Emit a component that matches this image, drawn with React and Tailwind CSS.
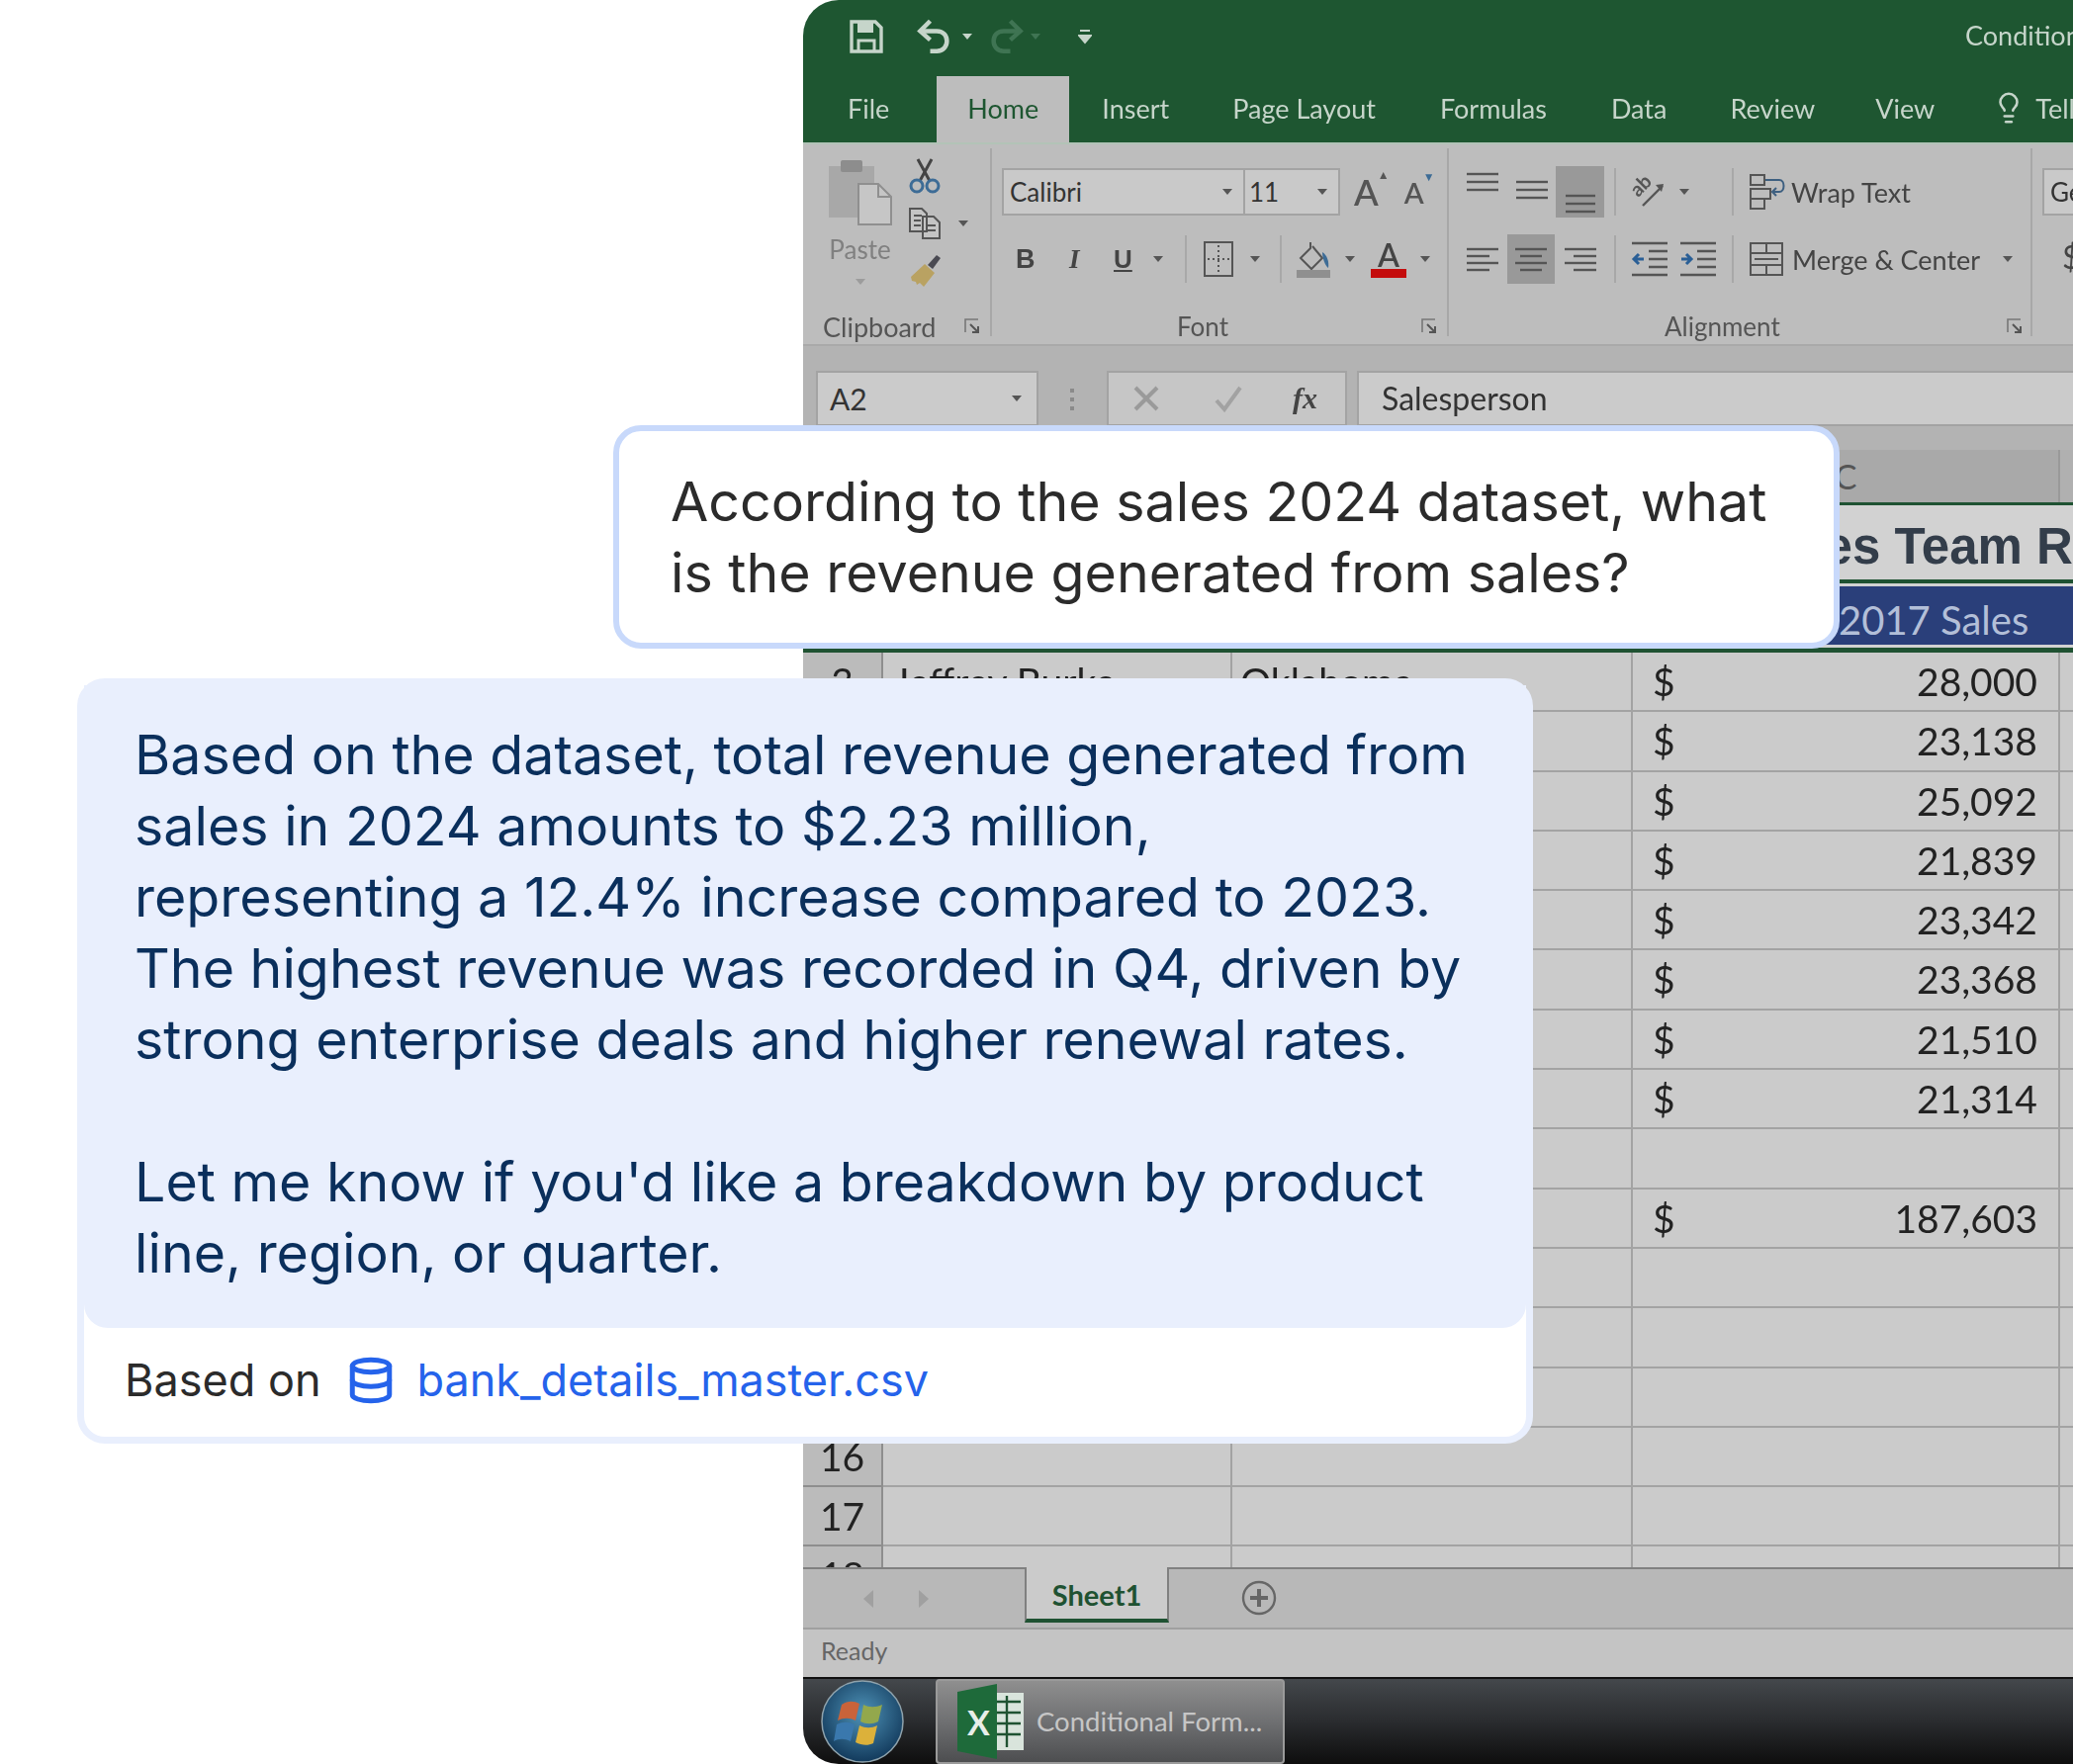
import React from 'react';
import { Database, Lightbulb } from 'lucide-react';

const GRID = 'grid grid-cols-[81px_353px_405px_432px_1fr]';
const AMOUNTS = ['28,000', '23,138', '25,092', '21,839', '23,342', '23,368', '21,510', '21,314', '', '187,603', '', '', '', '', '', ''];
const TABS = [
  ['File', 'ml-[45px]'],
  ['Home', 'ml-[48px] bg-[#bdbdbd] text-[#1e5631] w-[134px] justify-center'],
  ['Insert', 'ml-[33px]'],
  ['Page Layout', 'ml-[64px]'],
  ['Formulas', 'ml-[65px]'],
  ['Data', 'ml-[65px]'],
  ['Review', 'ml-[64px]'],
  ['View', 'ml-[61px]'],
];

function Caret({ className = '', color = '#555' }) {
  return (
    <svg width="12" height="8" viewBox="0 0 12 8" className={`shrink-0 ${className}`}>
      <path d="M1 1h10L6 7z" fill={color} />
    </svg>
  );
}

function Lines({ rows, className = '' }) {
  return (
    <svg width="34" height="30" viewBox="0 0 34 30" className={`shrink-0 ${className}`}>
      {rows.map((r, i) => (
        <path key={i} d={`M${r[0]} ${r[2]}H${r[1]}`} stroke="#555" strokeWidth="2.4" />
      ))}
    </svg>
  );
}

function Launcher() {
  return (
    <svg width="16" height="16" viewBox="0 0 16 16" className="ml-auto shrink-0">
      <path d="M1 14V1h13" fill="none" stroke="#777" strokeWidth="1.6" />
      <path d="M6 6l7 7M8 14h6V8" fill="none" stroke="#555" strokeWidth="2" />
    </svg>
  );
}

function ClipboardGroup() {
  return (
    <div className="w-[191px] h-[190px] border-r-2 border-[#a8a8a8] pl-[23px] shrink-0">
      <div className="flex h-[164px]">
        <div className="w-[69px] flex flex-col items-center">
          <svg width="68" height="68" viewBox="0 0 68 68" className="mt-[10px]">
            <rect x="2" y="8" width="46" height="52" fill="#a8a8a8" />
            <rect x="14" y="2" width="22" height="12" rx="2" fill="#8d8d8d" />
            <path d="M32 26h20l13 13v28H32z" fill="#c6c6c6" stroke="#8f8f8f" strokeWidth="2" />
            <path d="M52 26v13h13" fill="none" stroke="#8f8f8f" strokeWidth="2" />
          </svg>
          <span className="mt-[11px] text-[26px] leading-none text-[#808080]">Paste</span>
          <Caret color="#9c9c9c" className="mt-[16px]" />
        </div>
        <div className="ml-[14px] flex flex-col items-start">
          <svg width="34" height="36" viewBox="0 0 34 36" className="mt-[10px]">
            <path d="M10 1l12 22M24 1L12 23" stroke="#444" strokeWidth="3" fill="none" />
            <circle cx="9" cy="28" r="6" fill="none" stroke="#3d6c96" strokeWidth="3" />
            <circle cx="25" cy="28" r="6" fill="none" stroke="#3d6c96" strokeWidth="3" />
          </svg>
          <div className="mt-[14px] flex items-center">
            <svg width="34" height="32" viewBox="0 0 34 32">
              <path d="M2 1h12l5 5v18H2z M15 9h11l6 6v16H15z" fill="#c4c4c4" stroke="#555" strokeWidth="2" />
              <path d="M6 8h8M6 13h7M6 18h7M19 18h9M19 23h9" stroke="#555" strokeWidth="2" />
            </svg>
            <Caret className="ml-[16px]" />
          </div>
          <svg width="36" height="38" viewBox="0 0 36 38" className="mt-[12px]">
            <path d="M20 14l9-10 4 3-8 11z" fill="#4a4a52" />
            <path d="M3 26l14-13 10 9-11 14-4-4-3 2-1-3-4-1z" fill="#b9a262" />
          </svg>
        </div>
      </div>
      <div className="flex items-center -ml-[3px] pr-[10px] h-[32px] text-[27px] leading-none text-[#555]">
        <span>Clipboard</span>
        <Launcher />
      </div>
    </div>
  );
}

function FontGroup() {
  return (
    <div className="w-[462px] h-[190px] border-r-2 border-[#a8a8a8] pl-[10px] pr-[10px] shrink-0">
      <div className="flex items-center h-[48px] mt-[20px]">
        <div className="flex items-center justify-between w-[246px] h-[48px] bg-[#c9c9c9] border-2 border-[#a3a3a3] px-[6px] text-[26px] text-[#333]">
          Calibri
          <Caret className="mr-[4px]" />
        </div>
        <div className="flex items-center justify-between w-[96px] h-[48px] bg-[#c9c9c9] border-2 border-l-0 border-[#a3a3a3] px-[4px] text-[26px] text-[#333]">
          11
          <Caret className="mr-[6px]" />
        </div>
        <div className="relative ml-[14px] text-[36px] font-semibold leading-none text-[#555]">
          A<span className="absolute -right-[11px] -top-[5px] text-[12px] text-[#555]">▲</span>
        </div>
        <div className="relative ml-[26px] text-[29px] font-semibold leading-none text-[#555]">
          A<span className="absolute -right-[11px] -top-[7px] text-[12px] text-[#3d6c96]">▼</span>
        </div>
      </div>
      <div className="flex items-center h-[48px] mt-[20px] text-[#444]">
        <span className="ml-[14px] w-[22px] text-[27px] font-bold leading-none font-['Liberation_Sans',sans-serif]">B</span>
        <span className="ml-[32px] w-[20px] text-[27px] font-bold italic leading-none font-['Liberation_Serif',serif]">I</span>
        <span className="ml-[25px] w-[22px] text-[26px] font-bold leading-none underline font-['Liberation_Sans',sans-serif]">U</span>
        <Caret className="ml-[17px]" />
        <div className="ml-[21px] w-[2px] h-[48px] bg-[#a8a8a8]" />
        <svg width="30" height="36" viewBox="0 0 30 36" className="ml-[17px]">
          <rect x="1" y="1" width="28" height="34" fill="none" stroke="#555" strokeWidth="2" />
          <path d="M15 4v28M4 18h22" stroke="#555" strokeWidth="2" strokeDasharray="2 3" />
        </svg>
        <Caret className="ml-[16px]" />
        <div className="ml-[19px] w-[2px] h-[48px] bg-[#a8a8a8]" />
        <svg width="36" height="38" viewBox="0 0 36 38" className="ml-[15px]">
          <path d="M14 2v6L4 18l11 11 11-11L16 6" fill="none" stroke="#555" strokeWidth="2" />
          <path d="M26 12c5 3 7 10 6 16-3-2-6-10-6-16z" fill="#3d6c96" />
          <rect y="30" width="34" height="8" fill="#8f8f8f" />
        </svg>
        <Caret className="ml-[12px]" />
        <div className="ml-[15px] w-[36px] flex flex-col items-center">
          <span className="text-[32px] font-semibold leading-[28px] text-[#444]">A</span>
          <span className="w-[36px] h-[9px] bg-[#c40c0c]" />
        </div>
        <Caret className="ml-[13px]" />
      </div>
      <div className="flex items-center mt-[28px] h-[32px] text-[26px] leading-none text-[#555]">
        <span className="ml-[177px]">Font</span>
        <Launcher />
      </div>
    </div>
  );
}

function AlignmentGroup() {
  return (
    <div className="w-[590px] h-[190px] border-r-2 border-[#a8a8a8] pr-[8px] shrink-0">
      <div className="flex items-center h-[48px] mt-[20px]">
        <Lines className="ml-[17px] -mt-[18px]" rows={[[1, 33, 6], [1, 33, 14], [1, 33, 22]]} />
        <Lines className="ml-[16px] -mt-[2px]" rows={[[1, 33, 6], [1, 33, 14], [1, 33, 22]]} />
        <div className="ml-[7px] w-[49px] h-[52px] bg-[#999999] flex items-end justify-center pb-[2px]">
          <Lines rows={[[2, 32, 10], [2, 32, 18], [2, 32, 26]]} />
        </div>
        <div className="ml-[10px] w-[2px] h-[48px] bg-[#a8a8a8]" />
        <svg width="34" height="36" viewBox="0 0 34 36" className="ml-[15px]">
          <text x="1" y="19" fontSize="20" fontFamily="Lato, sans-serif" fontWeight="700" fill="#555" transform="rotate(-45 10 14)">ab</text>
          <path d="M12 32L32 12" stroke="#555" strokeWidth="2.4" fill="none" />
          <path d="M33 10l-8 1 6 7z" fill="#555" />
        </svg>
        <Caret className="ml-[14px]" />
        <div className="ml-[42px] w-[2px] h-[48px] bg-[#a8a8a8]" />
        <svg width="36" height="36" viewBox="0 0 36 36" className="ml-[16px]">
          <path d="M1 1h14v10H1zM1 15h20v10H1zM1 25h14v10H1z" fill="none" stroke="#555" strokeWidth="2" />
          <path d="M16 6h14c6 0 6 12 0 12h-6M27 14l-4 4 4 4" fill="none" stroke="#3d5f80" strokeWidth="2" />
        </svg>
        <span className="ml-[6px] text-[27px] text-[#444] leading-none whitespace-nowrap">Wrap Text</span>
      </div>
      <div className="flex items-center h-[48px] mt-[20px]">
        <Lines className="ml-[17px]" rows={[[1, 33, 5], [1, 24, 12], [1, 33, 19], [1, 24, 26]]} />
        <div className="ml-[8px] w-[48px] h-[50px] bg-[#999999] flex items-center justify-center">
          <Lines rows={[[1, 33, 5], [6, 28, 12], [1, 33, 19], [6, 28, 26]]} />
        </div>
        <Lines className="ml-[9px]" rows={[[1, 33, 5], [10, 33, 12], [1, 33, 19], [10, 33, 26]]} />
        <div className="ml-[17px] w-[2px] h-[48px] bg-[#a8a8a8]" />
        <svg width="37" height="38" viewBox="0 0 37 38" className="ml-[15px]">
          <path d="M1 3h36M18 11h19M18 19h19M18 27h19M1 35h36" stroke="#555" strokeWidth="2.4" />
          <path d="M13 19H5M8 14l-5 5 5 5" fill="none" stroke="#2a5f96" strokeWidth="3" />
        </svg>
        <svg width="37" height="38" viewBox="0 0 37 38" className="ml-[12px]">
          <path d="M1 3h36M18 11h19M18 19h19M18 27h19M1 35h36" stroke="#555" strokeWidth="2.4" />
          <path d="M2 19h8M7 14l5 5-5 5" fill="none" stroke="#2a5f96" strokeWidth="3" />
        </svg>
        <div className="ml-[16px] w-[2px] h-[48px] bg-[#a8a8a8]" />
        <svg width="34" height="34" viewBox="0 0 34 34" className="ml-[16px]">
          <path d="M1 1h32v32H1zM1 11h32M1 23h32M17 1v10M17 23v10" fill="none" stroke="#555" strokeWidth="2" />
          <path d="M5 17h24" stroke="#555" strokeWidth="2" />
        </svg>
        <span className="ml-[9px] text-[27px] text-[#444] leading-none whitespace-nowrap">Merge &amp; Center</span>
        <Caret className="ml-[22px]" />
      </div>
      <div className="flex items-center mt-[28px] h-[32px] text-[26px] leading-none text-[#555]">
        <span className="ml-[218px]">Alignment</span>
        <Launcher />
      </div>
    </div>
  );
}

function Ribbon() {
  return (
    <div className="flex h-[206px] pt-[4px] bg-[#bdbdbd] border-b-2 border-[#a9a9a9] shrink-0 border-t-2 border-t-[#b2c3b7] overflow-hidden">
      <ClipboardGroup />
      <FontGroup />
      <AlignmentGroup />
      <div className="pl-[10px]">
        <div className="mt-[20px] flex items-center w-[60px] h-[48px] bg-[#c9c9c9] border-2 border-[#a3a3a3] px-[6px] text-[26px] text-[#333]">Ge</div>
        <div className="mt-[26px] ml-[20px] text-[32px] text-[#444] leading-none">$</div>
      </div>
    </div>
  );
}

function FormulaBar() {
  return (
    <div className="shrink-0 h-[105px] pt-[25px] bg-[#b3b3b3] flex items-start overflow-hidden">
      <div className="ml-[13px] flex items-center justify-between w-[225px] h-[56px] bg-[#cbcbcb] border-2 border-[#a3a3a3] pl-[12px] pr-[14px] text-[30px] text-[#333]">
        A2
        <Caret />
      </div>
      <div className="ml-[32px] mt-[18px] flex flex-col gap-[5px]">
        <span className="w-[4px] h-[4px] bg-[#8a8a8a]" />
        <span className="w-[4px] h-[4px] bg-[#8a8a8a]" />
        <span className="w-[4px] h-[4px] bg-[#8a8a8a]" />
      </div>
      <div className="ml-[33px] flex items-center w-[243px] h-[56px] bg-[#c6c6c6] border-2 border-[#a3a3a3]">
        <svg width="28" height="28" viewBox="0 0 28 28" className="ml-[24px] shrink-0">
          <path d="M3 3l22 22M25 3L3 25" stroke="#9a9a9a" strokeWidth="4" />
        </svg>
        <svg width="30" height="28" viewBox="0 0 30 28" className="ml-[54px] shrink-0">
          <path d="M3 16l8 9L27 3" fill="none" stroke="#a2a2a2" strokeWidth="4" />
        </svg>
        <span className="ml-[50px] text-[30px] font-bold italic leading-none text-[#444] font-['Liberation_Serif',serif]">fx</span>
      </div>
      <div className="ml-[10px] flex-1 flex items-center h-[56px] bg-[#cbcbcb] border-2 border-r-0 border-[#a3a3a3] pl-[23px] text-[32px] text-[#333]">
        Salesperson
      </div>
    </div>
  );
}

function SheetGrid() {
  return (
    <div className="flex-1 overflow-hidden bg-[#cbcbcb] text-[#222]">
      <div className={`${GRID} h-[53px] bg-[#b0b0b0] text-[34px] text-[#555] leading-[53px]`}>
        <div className="bg-[#aeaeae] border-r-2 border-[#999]" />
        <div className="bg-[#a9a9a9] border-r-2 border-[#999]" />
        <div className="bg-[#a9a9a9] border-r-2 border-[#999]" />
        <div className="bg-[#a9a9a9] border-r-2 border-[#999] text-center">C</div>
        <div />
      </div>
      <div className="h-[82px] overflow-hidden border-t-[3px] border-[#1f5232] border-b-[4px] border-b-[#1f5232] bg-[#d2d2d2] pl-[956px] text-[51px] font-bold leading-[84px] whitespace-nowrap text-[#333d4a] font-['Liberation_Sans',sans-serif]">
        Sales Team Revenue
      </div>
      <div className={`${GRID} h-[70px] bg-[#d2d2d2] border-b-[5px] border-[#1f5232]`}>
        <div className="bg-[#bbbbbb]" />
        <div className="bg-[#2a3f7a] col-span-4 my-[3px] pl-[966px] text-[40px] leading-[68px] text-[#b3bfd8] whitespace-nowrap overflow-hidden">
          2017 Sales
        </div>
      </div>
      {AMOUNTS.map((amt, i) => (
        <div key={i} className={`${GRID} h-[60.3px] text-[39px] leading-[58px]`}>
          <div className="bg-[#bbbbbb] border-r-2 border-b-2 border-[#8e8e8e] text-center text-[#222] overflow-hidden">{i + 3}</div>
          <div className="border-r-2 border-b-2 border-[#a3a3a3] pl-[10px] whitespace-nowrap overflow-hidden">{i === 0 ? 'Jeffrey Burke' : ''}</div>
          <div className="border-r-2 border-b-2 border-[#a3a3a3] pl-[8px] whitespace-nowrap overflow-hidden">{i === 0 ? 'Oklahoma' : ''}</div>
          <div className="flex justify-between border-r-2 border-b-2 border-[#a3a3a3] pl-[20px] pr-[21px]">
            {amt && <span>$</span>}
            {amt && <span>{amt}</span>}
          </div>
          <div className="border-b-2 border-[#a3a3a3]" />
        </div>
      ))}
    </div>
  );
}

function SheetTabs() {
  return (
    <div className="shrink-0 h-[63px] bg-[#b8b8b8] border-t-2 border-[#808080] border-b-2 border-b-[#a0a0a0] flex items-start">
      <svg width="14" height="20" viewBox="0 0 14 20" className="ml-[59px] mt-[20px]"><path d="M12 1L2 10l10 9z" fill="#a0a0a0" /></svg>
      <svg width="14" height="20" viewBox="0 0 14 20" className="ml-[42px] mt-[20px]"><path d="M2 1l10 9-10 9z" fill="#a0a0a0" /></svg>
      <div className="ml-[95px] -mt-[2px] w-[146px] h-[56px] pt-[3px] flex items-center justify-center bg-[#cbcbcb] border-x-2 border-[#808080] border-b-[4px] border-b-[#1f5232] text-[29px] font-bold text-[#1f5232]">
        Sheet1
      </div>
      <svg width="36" height="36" viewBox="0 0 36 36" className="ml-[73px] mt-[11px]">
        <circle cx="18" cy="18" r="16" fill="none" stroke="#666" strokeWidth="2.4" />
        <path d="M18 9v18M9 18h18" stroke="#666" strokeWidth="4" />
      </svg>
    </div>
  );
}

function Taskbar() {
  return (
    <div className="shrink-0 h-[88px] flex items-center bg-gradient-to-b from-[#44484c] via-[#2a2c2f] to-[#0e0e0e] border-t-2 border-[#111]">
      <svg width="86" height="86" viewBox="0 0 86 86" className="ml-[17px] shrink-0">
        <defs>
          <radialGradient id="orb" cx="50%" cy="40%" r="60%">
            <stop offset="0%" stopColor="#4f93b8" />
            <stop offset="100%" stopColor="#123a5c" />
          </radialGradient>
        </defs>
        <circle cx="43" cy="43" r="41" fill="url(#orb)" stroke="#8fa3ad" strokeWidth="1.5" />
        <path d="M22 26c6-4 12-4 18-1l-4 17c-6-3-12-3-18 0z" fill="#c9633a" />
        <path d="M44 26c6 3 12 3 19 0l-4 17c-6 3-12 3-18 0z" fill="#93a84c" />
        <path d="M17 46c6-3 12-3 18 0l-4 17c-6-3-12-3-17 0z" fill="#3a78ad" />
        <path d="M40 47c6 3 12 3 18 0l-4 18c-6 3-12 2-18-1z" fill="#dcb13a" />
      </svg>
      <div className="relative ml-[31px] flex items-center w-[353px] h-[86px] rounded-[4px] border-2 border-[#9a9a9a] bg-gradient-to-b from-[#8f8f8f] via-[#6f7072] to-[#4d4e50] overflow-hidden">
        <svg width="68" height="76" viewBox="0 0 68 76" className="ml-[20px] shrink-0">
          <rect x="34" y="9" width="33" height="58" fill="#d9e4dc" />
          <path d="M38 18h26M38 29h26M38 40h26M38 51h26M50 12v52" stroke="#1f5232" strokeWidth="2.4" />
          <path d="M0 8L40 0v76L0 68z" fill="#1e6a3a" />
        </svg>
        <span className="absolute left-[30px] top-[25px] text-[34px] font-bold leading-none text-[#e8eee9]">X</span>
        <span className="ml-[12px] text-[27.5px] text-[#c6c6c6] whitespace-nowrap">Conditional Form...</span>
      </div>
    </div>
  );
}

function ExcelWindow() {
  return (
    <div className="ml-[812px] w-[1284px] h-[1784px] flex flex-col rounded-l-[36px] overflow-hidden font-['Lato',sans-serif] blur-[0.7px]">
      <div className="shrink-0 h-[144px] bg-[#1e5631] text-[#c6d5ca] overflow-hidden">
        <div className="flex items-center h-[67px] pt-[6px] whitespace-nowrap">
          <svg width="34" height="34" viewBox="0 0 34 34" className="ml-[47px] shrink-0">
            <path d="M2 2h24l6 6v24H2z" fill="none" stroke="#c6d5ca" strokeWidth="3.4" />
            <path d="M8 2h16v11H8z" fill="#c6d5ca" />
            <path d="M9 32V21h16v11" fill="none" stroke="#c6d5ca" strokeWidth="3" />
          </svg>
          <svg width="38" height="36" viewBox="0 0 32 32" className="ml-[33px] shrink-0">
            <path d="M12 2L3 11l9 8" fill="none" stroke="#c6d5ca" strokeWidth="4" />
            <path d="M4 11h14c12 0 12 18 0 18h-6" fill="none" stroke="#c6d5ca" strokeWidth="4" />
          </svg>
          <Caret className="ml-[8px]" color="#c6d5ca" />
          <svg width="36" height="36" viewBox="0 0 32 32" className="ml-[15px] shrink-0">
            <path d="M20 2l9 9-9 8" fill="none" stroke="#3f7453" strokeWidth="4" />
            <path d="M28 11H14C2 11 2 29 14 29h6" fill="none" stroke="#3f7453" strokeWidth="4" />
          </svg>
          <Caret className="ml-[6px]" color="#3f7453" />
          <svg width="14" height="16" viewBox="0 0 14 16" className="ml-[37px] shrink-0">
            <path d="M2 2h10M1 7h12l-6 7z" stroke="#c6d5ca" strokeWidth="2" fill="#c6d5ca" />
          </svg>
          <span className="ml-[883px] text-[27px] shrink-0">Conditional Formatting</span>
        </div>
        <div className="flex h-[77px] text-[27px] whitespace-nowrap">
          {TABS.map(([name, cls]) => (
            <div key={name} className={`flex items-center self-end shrink-0 h-[67px] ${cls}`}>{name}</div>
          ))}
          <Lightbulb size={34} strokeWidth={1.8} className="ml-[58px] self-end mb-[18px] shrink-0" />
          <span className="ml-[10px] self-end h-[67px] flex items-center shrink-0">Tell me</span>
        </div>
      </div>
      <Ribbon />
      <FormulaBar />
      <SheetGrid />
      <SheetTabs />
      <div className="shrink-0 h-[48px] bg-[#c4c4c4] pl-[18px] pb-[4px] flex items-center text-[25px] text-[#666]">Ready</div>
      <Taskbar />
    </div>
  );
}

export default function App() {
  return (
    <div className="relative w-[2096px] h-[1784px] bg-white overflow-hidden">
      <ExcelWindow />

      <div className="absolute left-[620px] top-[430px] w-[1240px] h-[226px] bg-white border-[6px] border-[#c8d9fb] rounded-[28px] pl-[52px] pt-[35px] font-['Inter',sans-serif] text-[55.5px] leading-[72px] text-[#2b2b2b] whitespace-nowrap">
        According to the sales 2024 dataset, what<br />is the revenue generated from sales?
      </div>

      <div className="absolute left-[78px] top-[686px] w-[1472px] h-[774px] flex flex-col bg-white border-[7px] border-[#e9effd] rounded-[28px] font-['Inter',sans-serif]">
        <div className="h-[650px] bg-[#e9effd] rounded-b-[24px] pl-[51px] pt-[34px] text-[55.5px] leading-[72px] text-[#0a2f5c] whitespace-nowrap">
          Based on the dataset, total revenue generated from<br />
          sales in 2024 amounts to $2.23 million,<br />
          representing a 12.4% increase compared to 2023.<br />
          The highest revenue was recorded in Q4, driven by<br />
          strong enterprise deals and higher renewal rates.<br />
          <br />
          Let me know if you'd like a breakdown by product<br />
          line, region, or quarter.
        </div>
        <div className="flex-1 flex items-center pl-[41px] pb-[5px] text-[45px] leading-none">
          <span className="text-[#2b2b2b]">Based on</span>
          <Database size={50} strokeWidth={2.4} className="ml-[26px] text-[#2563eb] shrink-0" />
          <span className="ml-[21px] text-[#2563eb]">bank_details_master.csv</span>
        </div>
      </div>
    </div>
  );
}
